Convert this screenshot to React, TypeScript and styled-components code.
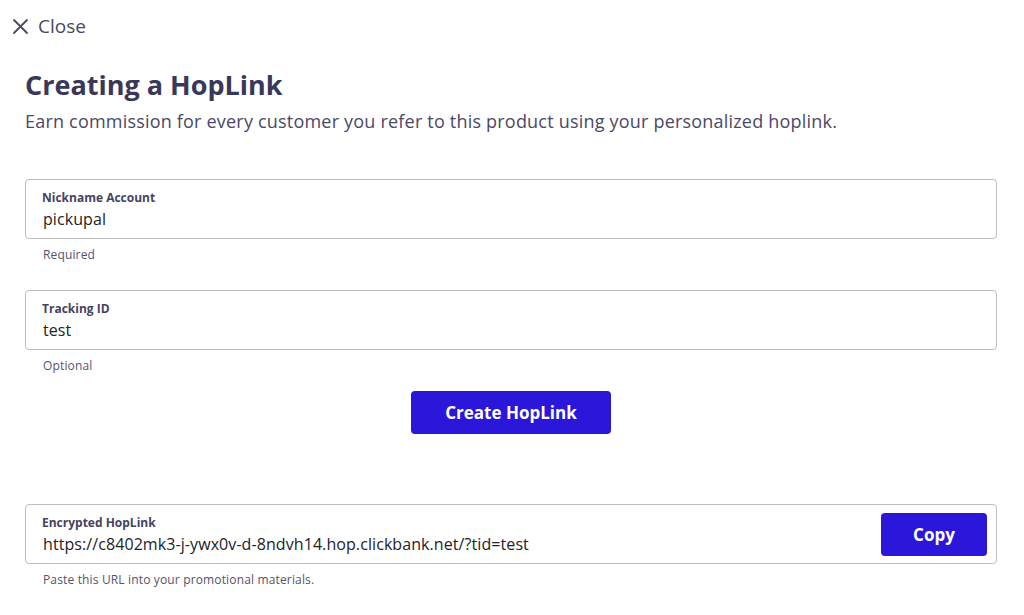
import styled, { createGlobalStyle } from 'styled-components';

const GlobalStyle = createGlobalStyle`
	body {
		margin: 0;
		background: #ffffff;
		font-family: 'Open Sans', 'Lato', sans-serif;
	}
`;

const Page = styled.div`
	width: 1024px;
	height: 615px;
	box-sizing: border-box;
	padding: 13px 27px 0 25px;
	display: flex;
	flex-direction: column;
`;

const CloseButton = styled.button`
	display: flex;
	align-items: center;
	gap: 9px;
	margin-left: -13px;
	padding: 0;
	border: none;
	background: none;
	font-family: inherit;
	font-size: 19px;
	color: #4a4866;
	cursor: pointer;
	align-self: flex-start;
`;

const Title = styled.h1`
	margin: 29px 0 0;
	font-size: 27px;
	font-weight: 700;
	color: #39375a;
	line-height: 34px;
`;

const Subtitle = styled.p`
	margin: 7px 0 0;
	font-size: 18px;
	letter-spacing: 0.2px;
	color: #4a4866;
	line-height: 24px;
`;

const Field = styled.div<{ $top: number }>`
	margin-top: ${({ $top }) => $top}px;
	display: flex;
	flex-direction: column;
`;

const Box = styled.div`
	height: 60px;
	box-sizing: border-box;
	border: 1px solid #bcbcc4;
	border-radius: 4px;
	padding: 0 9px 0 16px;
	display: flex;
	align-items: center;
`;

const BoxText = styled.div`
	flex: 1;
	display: flex;
	flex-direction: column;
	gap: 4px;
`;

const Label = styled.span`
	font-size: 12px;
	font-weight: 700;
	color: #45435f;
	line-height: 15px;
`;

const Value = styled.span`
	font-size: 16px;
	letter-spacing: 0.08px;
	color: #222228;
	padding-left: 1px;
	line-height: 20px;
`;

const Helper = styled.span`
	margin-top: 8px;
	padding-left: 18px;
	font-size: 12px;
	letter-spacing: 0.15px;
	color: #55536c;
	line-height: 15px;
`;

const Primary = styled.button<{ $width: number }>`
	width: ${({ $width }) => $width}px;
	height: 43px;
	border: none;
	border-radius: 4px;
	background: #2a17d9;
	color: #ffffff;
	font-family: inherit;
	font-size: 17px;
	font-weight: 700;
	cursor: pointer;
`;

const Center = styled.div`
	margin-top: 18px;
	display: flex;
	justify-content: center;
`;

const CloseIcon = () => (
	<svg width="17" height="17" viewBox="0 0 17 17" fill="none" stroke="#4a4866" strokeWidth="1.8" strokeLinecap="round">
		<path d="M2 2 L15 15 M15 2 L2 15" />
	</svg>
);

const App = () => (
	<>
		<GlobalStyle />
		<Page>
			<CloseButton>
				<CloseIcon />
				Close
			</CloseButton>
			<Title>Creating a HopLink</Title>
			<Subtitle>Earn commission for every customer you refer to this product using your personalized hoplink.</Subtitle>

			<Field $top={46}>
				<Box>
					<BoxText>
						<Label>Nickname Account</Label>
						<Value>pickupal</Value>
					</BoxText>
				</Box>
				<Helper>Required</Helper>
			</Field>

			<Field $top={28}>
				<Box>
					<BoxText>
						<Label>Tracking ID</Label>
						<Value>test</Value>
					</BoxText>
				</Box>
				<Helper>Optional</Helper>
			</Field>

			<Center>
				<Primary $width={200}>Create HopLink</Primary>
			</Center>

			<Field $top={70}>
				<Box>
					<BoxText>
						<Label>Encrypted HopLink</Label>
						<Value>https://c8402mk3-j-ywx0v-d-8ndvh14.hop.clickbank.net/?tid=test</Value>
					</BoxText>
					<Primary $width={106}>Copy</Primary>
				</Box>
				<Helper>Paste this URL into your promotional materials.</Helper>
			</Field>
		</Page>
	</>
);

export default App;
